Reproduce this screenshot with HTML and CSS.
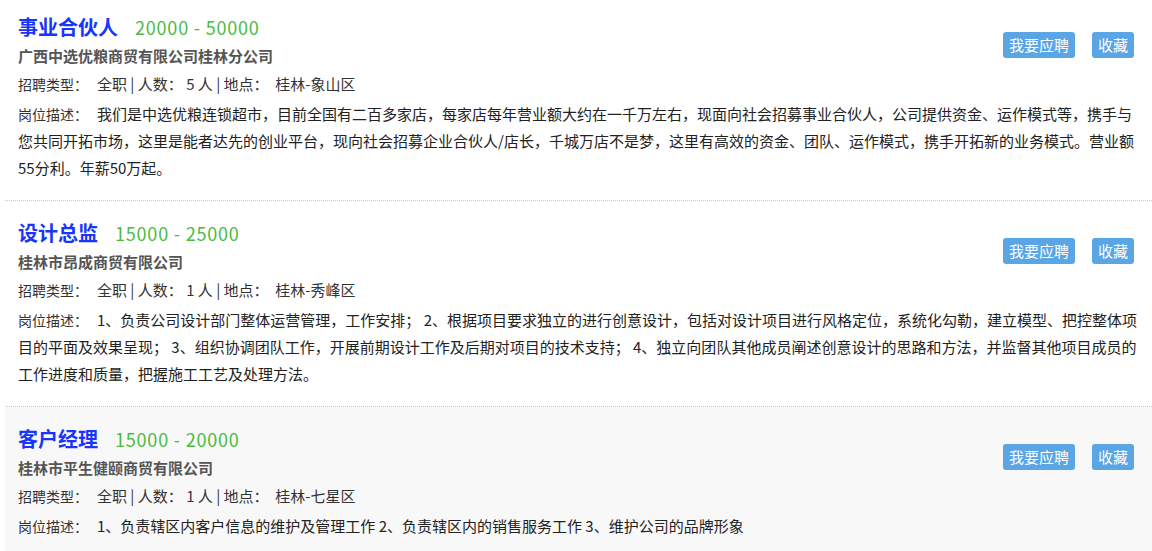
FILE: index.html
```html
<!DOCTYPE html>
<html lang="zh-CN">
<head>
    <meta charset="UTF-8">
    <title>招聘职位</title>
    <link rel="stylesheet" href="styles.css">
</head>
<body>
    <div class="job-list">
        <div class="job">
            <div class="job-head">
                <div class="job-main">
                    <div class="job-title"><span class="name">事业合伙人</span><span class="salary">20000 - 50000</span></div>
                    <div class="company">广西中选优粮商贸有限公司桂林分公司</div>
                    <div class="info"><span class="label">招聘类型：</span>全职 | 人数： 5 人 | 地点：&nbsp; 桂林-象山区</div>
                </div>
                <div class="actions">
                    <button class="btn">我要应聘</button>
                    <button class="btn">收藏</button>
                </div>
            </div>
            <div class="desc"><span class="label">岗位描述：</span>我们是中选优粮连锁超市，目前全国有二百多家店，每家店每年营业额大约在一千万左右，现面向社会招募事业合伙人，公司提供资金、运作模式等，携手与您共同开拓市场，这里是能者达先的创业平台，现向社会招募企业合伙人/店长，千城万店不是梦，这里有高效的资金、团队、运作模式，携手开拓新的业务模式。营业额55分利。年薪50万起。</div>
        </div>
        <div class="job">
            <div class="job-head">
                <div class="job-main">
                    <div class="job-title"><span class="name">设计总监</span><span class="salary">15000 - 25000</span></div>
                    <div class="company">桂林市昂成商贸有限公司</div>
                    <div class="info"><span class="label">招聘类型：</span>全职 | 人数： 1 人 | 地点：&nbsp; 桂林-秀峰区</div>
                </div>
                <div class="actions">
                    <button class="btn">我要应聘</button>
                    <button class="btn">收藏</button>
                </div>
            </div>
            <div class="desc"><span class="label">岗位描述：</span>1、负责公司设计部门整体运营管理，工作安排； 2、根据项目要求独立的进行创意设计，包括对设计项目进行风格定位，系统化勾勒，建立模型、把控整体项目的平面及效果呈现； 3、组织协调团队工作，开展前期设计工作及后期对项目的技术支持； 4、独立向团队其他成员阐述创意设计的思路和方法，并监督其他项目成员的工作进度和质量，把握施工工艺及处理方法。</div>
        </div>
        <div class="job active">
            <div class="job-head">
                <div class="job-main">
                    <div class="job-title"><span class="name">客户经理</span><span class="salary">15000 - 20000</span></div>
                    <div class="company">桂林市平生健颐商贸有限公司</div>
                    <div class="info"><span class="label">招聘类型：</span>全职 | 人数： 1 人 | 地点：&nbsp; 桂林-七星区</div>
                </div>
                <div class="actions">
                    <button class="btn">我要应聘</button>
                    <button class="btn">收藏</button>
                </div>
            </div>
            <div class="desc"><span class="label">岗位描述：</span>1、负责辖区内客户信息的维护及管理工作 2、负责辖区内的销售服务工作 3、维护公司的品牌形象</div>
        </div>
    </div>
</body>
</html>
```

FILE: styles.css
```css
body { margin: 0; font-family: "Noto Sans CJK SC", "Microsoft YaHei", sans-serif; background: #fff; color: #222; overflow: hidden; }
.job-list { margin: -5px 0 0 5px; }
.job { padding: 17px 10px 19px 13px; border-bottom: 1px dotted #c8c8c8; }
.job.active { background: #f8f8f8; }
.job-head { display: flex; justify-content: space-between; align-items: flex-start; }
.job-title { height: 30px; line-height: 30px; white-space: nowrap; }
.name { font-size: 20px; font-weight: bold; color: #1a35fa; }
.salary { font-size: 18px; letter-spacing: 0.8px; color: #4cbb3f; margin-left: 17px; }
.company { font-size: 15px; line-height: 28px; font-weight: bold; color: #555; }
.info { font-size: 15px; line-height: 28px; color: #333; }
.label { font-size: 14px; line-height: 1; margin-right: 9px; color: #333; }
.desc { font-size: 15px; line-height: 27px; margin-top: 2px; color: #222; }
.actions { display: flex; gap: 17px; margin: 20px 8px 0 0; }
.btn { height: 26px; padding: 0 6px; border: none; border-radius: 3px; background: #5aa5e4; color: #fff; font-family: inherit; font-size: 15px; line-height: 26px; cursor: pointer; }
.btn:hover { background: #3d8ed3; }
```
